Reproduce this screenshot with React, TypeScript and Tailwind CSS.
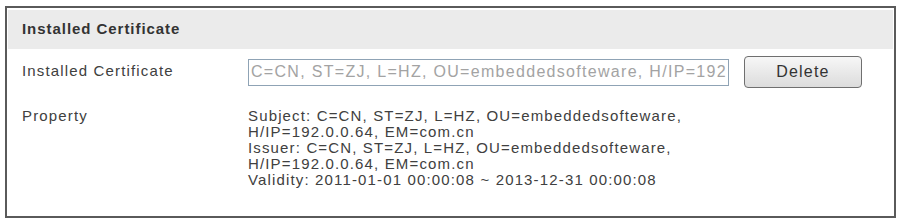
// Certificate panel: the installed certificate with its properties and a delete action.

const SUBJECT = [
  "Subject: C=CN, ST=ZJ, L=HZ, OU=embeddedsofteware,",
  "H/IP=192.0.0.64, EM=com.cn",
];
const ISSUER = [
  "Issuer: C=CN, ST=ZJ, L=HZ, OU=embeddedsofteware,",
  "H/IP=192.0.0.64, EM=com.cn",
];
const VALIDITY = "Validity: 2011-01-01 00:00:08 ~ 2013-12-31 00:00:08";

function App() {
  return (
    <div className="h-[220px] w-[898px] bg-white pl-[5px] pt-[6px] font-['Liberation_Sans',Arial,sans-serif] text-[15px] tracking-[1.15px] text-[#404040]">
      <div className="h-[212px] w-[891px] border-2 border-[#5a5a5a] px-[1px] pt-[2px]">
        <div className="flex h-[39px] items-center bg-[#ebebeb] pl-[14px] font-bold tracking-[0.95px] text-[#333]">
          Installed Certificate
        </div>

        <div className="mt-[7px] grid grid-cols-[226px_1fr] pl-[14px]">
          <div className="flex h-[32px] items-center pb-[2px]">Installed Certificate</div>
          <div className="flex h-[32px] items-center gap-[15px]">
            <input
              readOnly
              value="C=CN, ST=ZJ, L=HZ, OU=embeddedsofteware, H/IP=192.0.0.64, EM=com.cn"
              className="h-[27px] w-[481px] border border-[#8fa3b5] bg-white px-[2px] text-[16px] tracking-[1.3px] text-[#a3a3a3] outline-none"
            />
            <button className="h-[32px] w-[118px] rounded-[4px] border border-[#6f6f6f] bg-gradient-to-b from-[#f7f7f7] to-[#dcdcdc] text-[16px] tracking-[1.2px] text-[#333]">
              Delete
            </button>
          </div>

          <div className="mt-[20px] leading-[16px]">Property</div>
          <div className="mt-[20px] leading-[16px]">
            {[...SUBJECT, ...ISSUER, VALIDITY].map((line, i) => (
              <div key={i}>{line}</div>
            ))}
          </div>
        </div>
      </div>
    </div>
  );
}

export default App;
